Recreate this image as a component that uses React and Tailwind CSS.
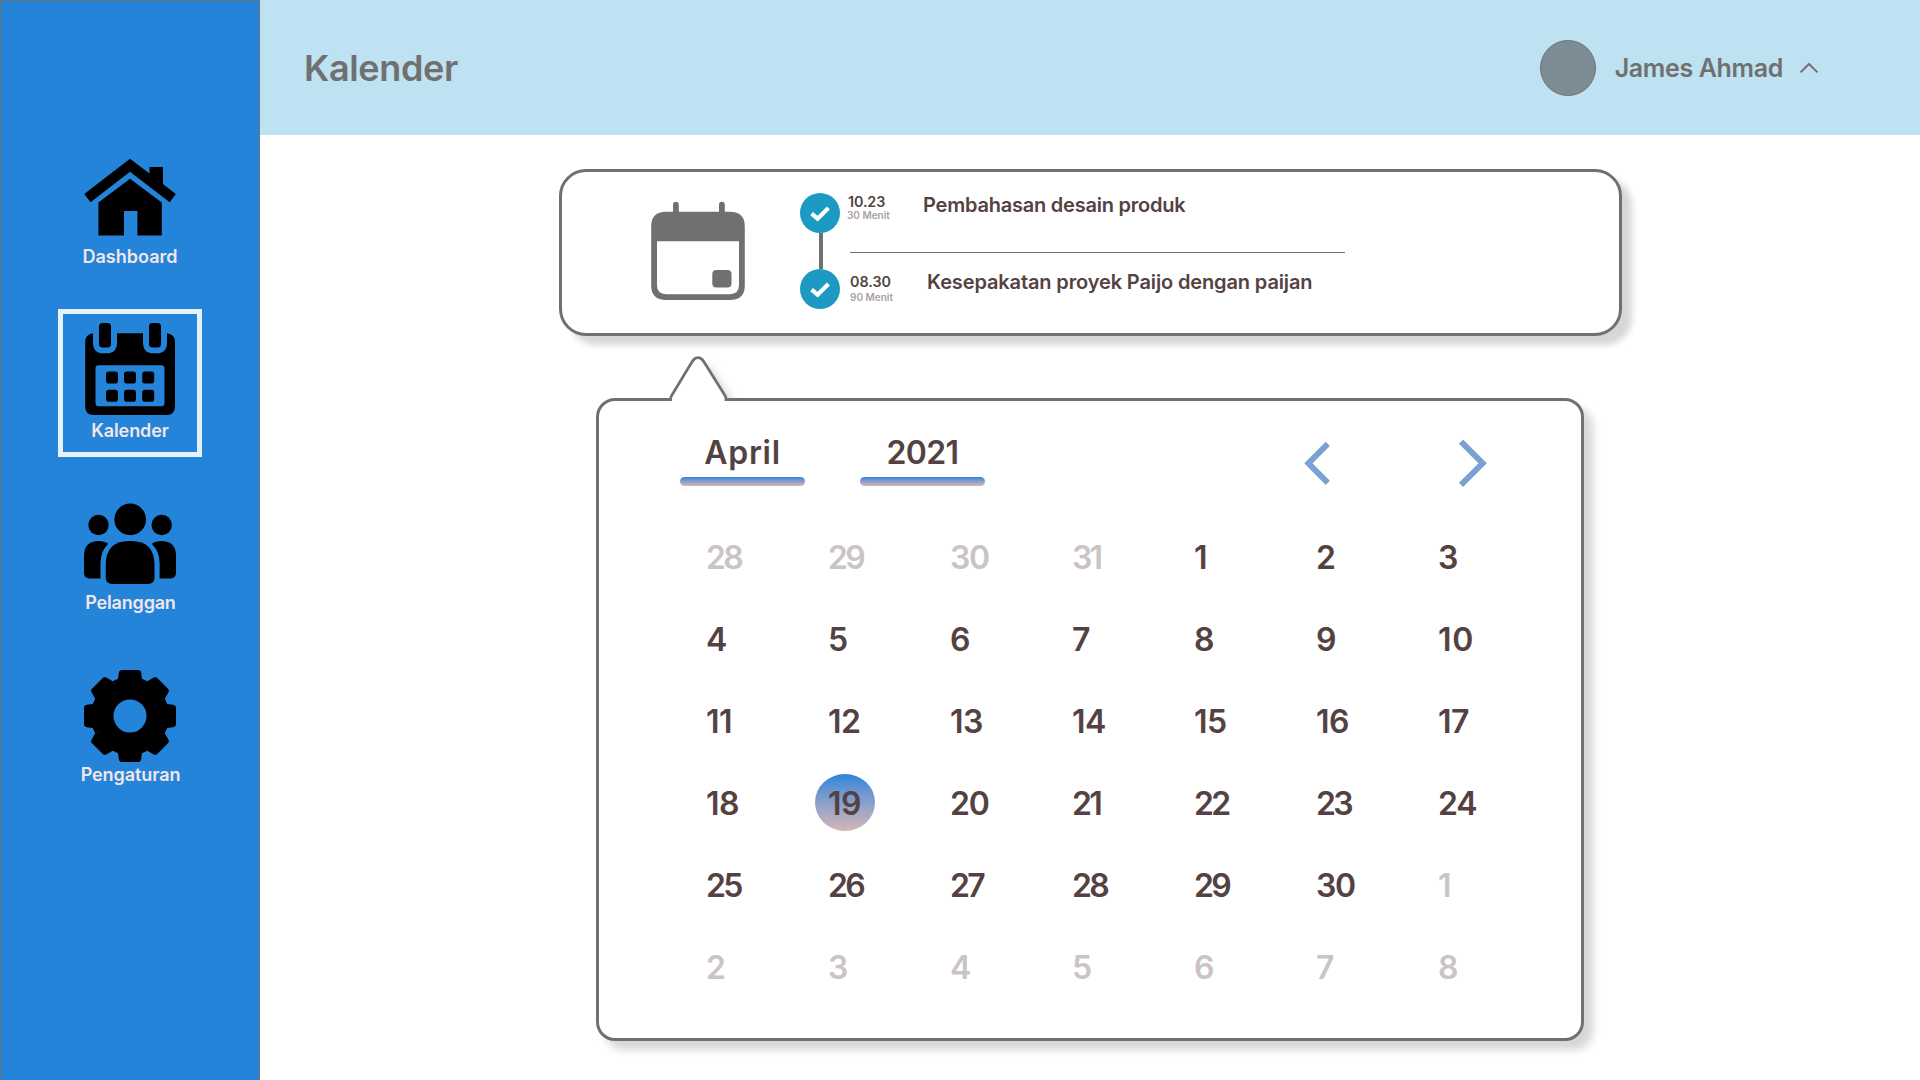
const HouseIcon = () => (
  <svg className="h-[78px] w-[92px]" viewBox="84 158 92 78">
    <path d="M130 158.7 L149.5 173.5 V167 H163 V184 L175.8 194 L169.7 202.2 L130 171.8 L90.5 202.2 L84.2 194 Z" />
    <path d="M130 178.8 L161.8 202.6 V235.6 H137.4 V211 H124 V235.6 H98.4 V202.6 Z" />
  </svg>
);

const CalendarIcon = () => (
  <svg className="h-[92px] w-[90px]" viewBox="85 323 90 92">
    <path
      fillRule="evenodd"
      d="M93 333.3 V342.5 Q93 353.3 103 353.3 H107 Q117 353.3 117 342.5 V333.3 H143 V342.5 Q143 353.3 153 353.3 H157 Q167 353.3 167 342.5 V333.3 Q175 334.5 175 342 V406.5 Q175 415 166.5 415 H93.5 Q85.2 415 85.2 406.5 V342 Q85.2 334.5 93 333.3 Z M98.5 365.2 Q95.5 365.2 95.5 368.2 V403.3 Q95.5 406.3 98.5 406.3 H161.5 Q164.5 406.3 164.5 403.3 V368.2 Q164.5 365.2 161.5 365.2 Z"
    />
    <rect x="99" y="323" width="12" height="24.6" rx="3.5" />
    <rect x="149" y="323" width="12" height="24.6" rx="3.5" />
    {[106, 124, 142.2].map((x) => (
      <g key={x}>
        <rect x={x} y="371.5" width="12" height="12" rx="2.8" />
        <rect x={x} y="389.7" width="12" height="12" rx="2.8" />
      </g>
    ))}
  </svg>
);

const PeopleIcon = () => (
  <svg className="h-[82px] w-[92px]" viewBox="84 503 92 82">
    <circle cx="130.2" cy="519.4" r="15.8" />
    <circle cx="98.5" cy="525" r="10.2" />
    <circle cx="161.7" cy="525" r="10.2" />
    <path d="M105.7 565 Q105.7 541 129 541 H131.5 Q154.5 541 154.5 565 V577.5 Q154.5 584 148 584 H112.2 Q105.7 584 105.7 577.5 Z" />
    <path d="M84 555 Q84.5 541 98.5 541 Q104.5 541 108.2 543.8 Q100.5 551.5 100.5 563 V578.4 H89.5 Q84 578.4 84 573 Z" />
    <path d="M176 555 Q175.5 541 161.5 541 Q155.5 541 151.8 543.8 Q159.6 551.5 159.6 563 V578.4 H170.5 Q176 578.4 176 573 Z" />
  </svg>
);

const GearIcon = () => (
  <svg className="size-[92px]" viewBox="-46 -46 92 92">
    <circle r="25.5" fill="none" stroke="#000" strokeWidth="18" />
    {[0, 90, 180, 270].map((a) => (
      <path
        key={a}
        transform={`rotate(${a})`}
        d="M-10 -18 L-17.3 -34.8 L-12 -37.3 L-11.2 -43.2 Q-10.6 -46 -8 -46 H8 Q10.6 -46 11.2 -43.2 L12 -37.3 L17.3 -34.8 L23.8 -38.5 Q25.6 -39.5 27 -38.2 L38.2 -27 Q39.5 -25.6 38.5 -23.8 L34.8 -17.3 L18 -10 L10 -18 Z"
      />
    ))}
  </svg>
);

const EventCalendarIcon = () => (
  <svg className="mt-[29px] h-[100px] w-[94px]" viewBox="651 201 94 100" fill="#707070">
    <path fillRule="evenodd" d="M666 211.7 H730 Q744.8 211.7 744.8 226.5 V285.5 Q744.8 300 730 300 H666 Q651.2 300 651.2 285.5 V226.5 Q651.2 211.7 666 211.7 Z M657 241.2 V285 Q657 294.2 666 294.2 H730 Q739 294.2 739 285 V241.2 Z" />
    <rect x="673" y="201.7" width="5.8" height="14" rx="2.9" />
    <rect x="719" y="201.7" width="5.8" height="14" rx="2.9" />
    <rect x="712.3" y="270" width="19.2" height="17.5" rx="4" />
  </svg>
);

const CheckDot = () => (
  <div className="size-10 rounded-full bg-[#1d9ac4]">
    <svg className="size-10" viewBox="0 0 40 40" fill="none" stroke="#fff" strokeWidth="4.2">
      <path d="M11.6 20.7 L17.6 25.7 L28.4 15" />
    </svg>
  </div>
);

const NavLabel = ({ children, className }) => (
  <span className={`block h-5 text-[18px] leading-5 font-semibold text-[#f3e6e9] ${className}`}>{children}</span>
);

function Sidebar() {
  return (
    <aside className="flex w-[260px] shrink-0 flex-col items-center border border-b-0 border-[#707070] bg-[#2484da] pt-[157px]">
      <HouseIcon />
      <NavLabel className="mt-[11px]">Dashboard</NavLabel>
      <div className="mt-[42px] flex h-[148px] w-36 shrink-0 flex-col items-center border-5 border-[#e6f2f8] pt-[9px]">
        <CalendarIcon />
        <NavLabel className="mt-[6px] tracking-[-0.1px]">Kalender</NavLabel>
      </div>
      <div className="mt-[46px] flex flex-col items-center">
        <PeopleIcon />
        <NavLabel className="mt-2 ml-px tracking-[-0.19px]">Pelanggan</NavLabel>
      </div>
      <div className="mt-[57px] flex flex-col items-center">
        <GearIcon />
        <NavLabel className="mt-[3px] ml-px tracking-[-0.07px]">Pengaturan</NavLabel>
      </div>
    </aside>
  );
}

function Header() {
  return (
    <header className="flex h-[135px] items-center justify-between bg-[#bee2f1] pr-[101px] pl-11 font-semibold text-[#707070]">
      <h1 className="text-[36px] leading-none tracking-[-0.35px]">Kalender</h1>
      <div className="flex items-center">
        <div className="size-14 rounded-full border border-[#707070] bg-[#7b8c95]" />
        <span className="mt-[2px] ml-[19px] text-[25px] leading-none tracking-[-0.35px]">James Ahmad</span>
        <svg className="ml-[17px] h-3 w-[19px]" viewBox="0.5 0 19 12" fill="none" stroke="#707070" strokeWidth="2">
          <path d="M1 10.4 L9.5 2 L18 10.4" />
        </svg>
      </div>
    </header>
  );
}

function Agenda() {
  return (
    <section className="mt-[34px] ml-[299px] flex h-[167px] w-[1063px] items-start rounded-[27px] border-3 border-[#707070] bg-white pl-[89px] shadow-[10px_9px_6px_rgba(0,0,0,0.16)]">
      <EventCalendarIcon />
      <div className="mt-[21px] ml-[55px] flex flex-col items-center">
        <CheckDot />
        <div className="ml-px h-9 w-1 bg-[#707070]" />
        <CheckDot />
      </div>
      <div className="mt-[21px] font-semibold text-[#544242]">
        <div className="flex h-[59px] pt-[2px] pl-2">
          <div className="w-[75px]">
            <div className="text-[14.3px] leading-[14px] tracking-[-0.1px]">10.23</div>
            <div className="mt-px -ml-px text-[10px] leading-[10px] text-[#aaa1a1]">30 Menit</div>
          </div>
          <div className="text-[20px] leading-5 tracking-[-0.22px]">Pembahasan desain produk</div>
        </div>
        <div className="ml-[10px] h-px w-[495px] bg-[#707070]" />
        <div className="flex pt-[19px] pl-[10px]">
          <div className="w-[77px] pt-[3px]">
            <div className="text-[14.3px] leading-[14px]">08.30</div>
            <div className="mt-[3px] text-[10px] leading-[10px] text-[#aaa1a1]">90 Menit</div>
          </div>
          <div className="text-[20px] leading-5 tracking-[-0.13px]">Kesepakatan proyek Paijo dengan paijan</div>
        </div>
      </div>
    </section>
  );
}

const POINTER = 'M670.6 401 V399 Q670.6 397.3 671.8 395.3 L691 363.5 C693.5 359.3 694.8 357.6 698 357.6 S702.5 359.3 705 363.5 L724.8 395.3 Q726 397.3 726 399 V401';

const Pointer = () => (
  <svg className="absolute top-[-51px] left-[61px] h-[51px] w-[90px]" viewBox="660 350 90 51">
    <clipPath id="above">
      <rect x="660" y="350" width="90" height="48" />
    </clipPath>
    <g clipPath="url(#above)">
      <path d={POINTER} className="blur-[4px]" transform="translate(9 9)" fill="#000" fillOpacity="0.16" />
    </g>
    <path d={POINTER} fill="#fff" stroke="#707070" strokeWidth="2.7" />
  </svg>
);

const Period = ({ children, className }) => (
  <div className="flex w-[125px] flex-col items-center">
    <span className={`h-8 text-[32px] leading-8 ${className}`}>{children}</span>
    <div className="mt-2 h-[9px] w-full rounded-full bg-linear-to-b from-[#2484da] to-[#d5b5b5]" />
  </div>
);

const DAYS = [
  ...[28, 29, 30, 31].map((n) => ({ n, muted: true })),
  ...Array.from({ length: 30 }, (_, i) => ({ n: i + 1, today: i === 18 })),
  ...Array.from({ length: 8 }, (_, i) => ({ n: i + 1, muted: true })),
];

/* Optical spacing between the two digits of a date. */
const digitSpacing = (n) => {
  if (n === 10) return 'tracking-[0.6px]';
  if (n < 20) return 'tracking-[-0.5px]';
  if (n % 10 === 0 || n === 24) return 'tracking-[-1.3px]';
  return 'tracking-[-2.8px]';
};

function Month() {
  return (
    <section className="relative mt-[62px] ml-[336px] h-[643px] w-[988px] rounded-[19px] border-3 border-[#707070] bg-white font-semibold text-[#544242] shadow-[9px_9px_9px_rgba(0,0,0,0.16)]">
      <Pointer />
      <div className="flex h-[115px] items-start pt-9 pl-[81px]">
        <Period className="tracking-[0.7px]">April</Period>
        <div className="w-[55px]" />
        <Period className="tracking-[-0.66px]">2021</Period>
        <svg className="mt-px ml-[319px] h-[50px] w-[26px]" viewBox="1304 438 26 50" fill="none" stroke="#7aa1cf" strokeWidth="5.9">
          <path d="M1327.8 443.8 L1308.4 463.3 L1327.8 482.8" />
        </svg>
        <svg className="mt-px ml-[128px] h-[50px] w-[30px]" viewBox="1458 438 30 50" fill="none" stroke="#7aa1cf" strokeWidth="5.9">
          <path d="M1461 441.7 L1482.7 463.3 L1461 484.9" />
        </svg>
      </div>
      <div className="grid grid-cols-[repeat(7,122px)] pl-[107px]">
        {DAYS.map(({ n, muted, today }, i) => (
          <div key={i} className={`relative h-[82px] text-[32px] leading-[83px] ${digitSpacing(n)} ${muted ? 'text-[#cac4c4]' : ''}`}>
            {today && <div className="absolute top-[12px] left-[-13px] h-[57px] w-[60px] rounded-[50%] bg-linear-to-b from-[#2484da] to-[#d5b5b5]" />}
            <span className="relative">{n}</span>
          </div>
        ))}
      </div>
    </section>
  );
}

export default function App() {
  return (
    <div className="flex h-[1080px] w-[1920px] overflow-hidden bg-white font-['Inter',sans-serif]">
      <Sidebar />
      <main className="flex-1">
        <Header />
        <Agenda />
        <Month />
      </main>
    </div>
  );
}
